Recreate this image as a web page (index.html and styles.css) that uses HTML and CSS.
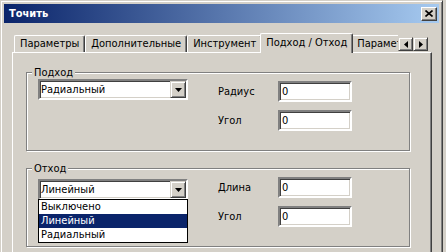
FILE: index.html
```html
<!DOCTYPE html>
<html lang="ru">

<head>
    <meta charset="UTF-8">
    <title>Точить</title>
    <link rel="stylesheet" href="styles.css">
</head>

<body>
    <div class="window">
        <div class="titlebar">
            <span class="title">Точить</span>
            <span class="close">
                <svg width="8" height="7" viewBox="0 0 8 7"><path d="M0.5 0.5 L7.5 6.5 M7.5 0.5 L0.5 6.5" stroke="#000" stroke-width="1.6" fill="none"/></svg>
            </span>
        </div>
        <div class="dialog">
            <div class="tabs">
                <div class="tab-strip">
                    <div class="tab">Параметры</div>
                    <div class="tab">Дополнительные</div>
                    <div class="tab">Инструмент</div>
                    <div class="tab active">Подход / Отход</div>
                    <div class="tab">Параметры вывода</div>
                </div>
                <div class="tab-scroll">
                    <span class="btn3d scroll-btn"><svg width="4" height="7" viewBox="0 0 4 7"><polygon points="4,0 4,7 0,3.5"/></svg></span>
                    <span class="btn3d scroll-btn"><svg width="4" height="7" viewBox="0 0 4 7"><polygon points="0,0 0,7 4,3.5"/></svg></span>
                </div>
            </div>
            <div class="pane">
                <!-- Подход -->
                <div class="group">
                    <div class="group-title">Подход</div>
                    <div class="fields">
                        <div class="combo combo-up">
                            <span class="combo-value">Радиальный</span>
                            <span class="btn3d combo-btn"><svg width="7" height="4" viewBox="0 0 7 4"><polygon points="0,0 7,0 3.5,4"/></svg></span>
                        </div>
                        <span class="label">Радиус</span>
                        <span class="edit">0</span>
                        <span class="label row2">Угол</span>
                        <span class="edit row2">0</span>
                    </div>
                </div>
                <!-- Отход -->
                <div class="group">
                    <div class="group-title">Отход</div>
                    <div class="fields">
                        <div class="combo combo-down">
                            <span class="combo-value">Линейный</span>
                            <span class="btn3d combo-btn"><svg width="7" height="4" viewBox="0 0 7 4"><polygon points="0,0 7,0 3.5,4"/></svg></span>
                            <ul class="combo-list">
                                <li>Выключено</li>
                                <li class="selected">Линейный</li>
                                <li>Радиальный</li>
                            </ul>
                        </div>
                        <span class="label">Длина</span>
                        <span class="edit">0</span>
                        <span class="label row2">Угол</span>
                        <span class="edit row2">0</span>
                    </div>
                </div>
            </div>
        </div>
    </div>
</body>

</html>
```

FILE: styles.css
```css
body {
    margin: 0;
    background-color: #d4d0c8;
    font-family: 'DejaVu Sans Condensed', 'DejaVu Sans', sans-serif;
    font-stretch: condensed;
    font-size: 11px;
    color: #000;
    overflow: hidden;
}

.window {
    width: 443px;
    height: 270px;
    box-sizing: border-box;
    padding: 3px;
    border: 1px solid;
    border-color: #d4d0c8 #404040 #404040 #d4d0c8;
    box-shadow: inset 1px 1px #fff, inset -1px -1px #808080;
}

/* Title bar */
.titlebar {
    height: 19px;
    display: flex;
    align-items: center;
    justify-content: space-between;
    padding: 0 2px 0 5px;
    background: linear-gradient(to right, #0a246a, #a6caf0);
    color: #fff;
    font-weight: bold;
}

.close {
    width: 16px;
    height: 14px;
    box-sizing: border-box;
    display: flex;
    align-items: center;
    justify-content: center;
    background-color: #d4d0c8;
    border: 1px solid;
    border-color: #fff #404040 #404040 #fff;
    box-shadow: inset -1px -1px #808080;
}

.dialog {
    padding: 10px 7px 0 8px;
}

/* Raised button look */
.btn3d {
    box-sizing: border-box;
    display: flex;
    align-items: center;
    justify-content: center;
    background-color: #d4d0c8;
    border: 1px solid;
    border-color: #d4d0c8 #404040 #404040 #d4d0c8;
    box-shadow: inset 1px 1px #fff, inset -1px -1px #808080;
}

/* Tabs */
.tabs {
    display: flex;
    height: 20px;
    margin-bottom: -1px;
    position: relative;
    z-index: 1;
}

.tab-strip {
    flex: 1;
    min-width: 0;
    display: flex;
    align-items: flex-end;
    overflow: hidden;
    padding-left: 2px;
}

.tab {
    flex: none;
    height: 17px;
    box-sizing: border-box;
    margin-bottom: 1px;
    padding: 0 5px;
    line-height: 16px;
    white-space: nowrap;
    border-left: 1px solid #fff;
    border-top: 1px solid #fff;
    border-right: 1px solid #404040;
    border-radius: 2px 2px 0 0;
    box-shadow: inset -1px 0 #808080;
}

.tab.active {
    height: 20px;
    margin: 0 -2px;
    padding: 0 5px;
    line-height: 17px;
    background-color: #d4d0c8;
    position: relative;
    z-index: 1;
}

.tab-scroll {
    display: flex;
    margin: 4px 4px 0 0;
    align-self: flex-start;
}

.scroll-btn {
    width: 15px;
    height: 14px;
}

/* Tab page */
.pane {
    height: 210px;
    box-sizing: border-box;
    padding: 19px 0 0 13px;
    border: 1px solid;
    border-color: #fff #404040 #404040 #fff;
    box-shadow: inset -1px -1px #808080;
}

.group {
    width: 384px;
    height: 79px;
    box-sizing: border-box;
    border: 1px solid #808080;
    box-shadow: inset 1px 1px #fff, 1px 1px #fff;
}

.group + .group {
    margin-top: 17px;
}

.group-title {
    width: fit-content;
    height: 13px;
    margin: -7px 0 0 5px;
    padding: 0 2px;
    line-height: 13px;
    background-color: #d4d0c8;
}

.fields {
    display: grid;
    grid-template-columns: 150px 90px 74px;
    grid-template-rows: 21px 21px;
    row-gap: 8px;
    margin: 2px 0 0 11px;
}

.combo {
    grid-column: 1;
    grid-row: 1;
}

.label {
    grid-column: 2;
    align-self: center;
    padding-left: 30px;
}

.edit {
    grid-column: 3;
}

.row2 {
    grid-row: 2;
}

/* Sunken fields */
.combo,
.edit {
    box-sizing: border-box;
    height: 21px;
    background-color: #fff;
    border: 2px solid;
    border-color: #808080 #fff #fff #808080;
    box-shadow: inset 1px 1px #404040, inset -1px -1px #d4d0c8;
}

.edit {
    padding: 1px 0 0 2px;
    line-height: 16px;
}

.combo {
    position: relative;
    display: flex;
    align-items: center;
}

.combo-up {
    margin-top: -2px;
}

.combo-down {
    margin-top: 2px;
}

.combo-value {
    flex: 1;
    padding-left: 1px;
}

.combo-btn {
    width: 16px;
    height: 17px;
}

.combo-list {
    position: absolute;
    top: 100%;
    left: -2px;
    width: 150px;
    box-sizing: border-box;
    margin: 1px 0 0;
    padding: 0;
    list-style: none;
    background-color: #fff;
    border: 1px solid #000;
}

.combo-list li {
    height: 14px;
    line-height: 14px;
    padding-left: 2px;
}

.combo-list li.selected {
    background-color: #0a246a;
    color: #fff;
}
```
